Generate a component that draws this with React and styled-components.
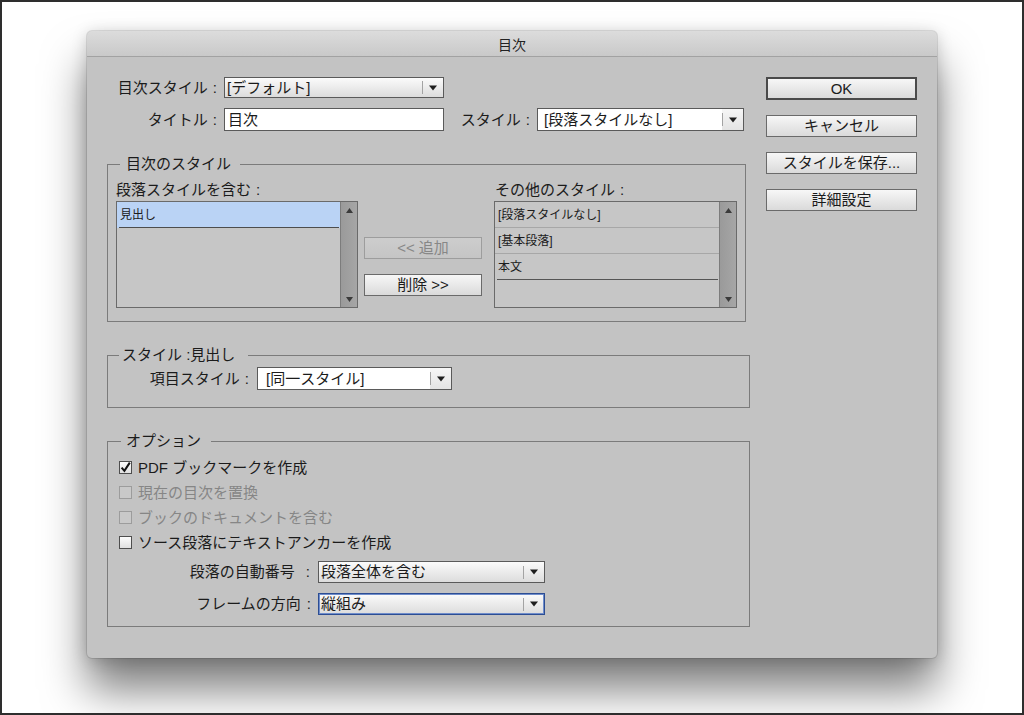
import React from 'react';
import styled, { createGlobalStyle, css } from 'styled-components';

const GlobalStyle = createGlobalStyle`
  html, body { margin: 0; padding: 0; background: #fff; }
  body {
    font-family: "Liberation Sans", "Noto Sans CJK JP", sans-serif;
    color: #1b1b1b;
  }
  *, *::before, *::after { box-sizing: border-box; }
`;

const Page = styled.div`
  width: 1024px;
  height: 715px;
  border: 2px solid #2e2e2e;
  background: #fff;
  padding: 29px 0 0 85px;
  overflow: hidden;
`;

const Dialog = styled.div`
  width: 850px;
  height: 627px;
  background: #c3c3c3;
  border-radius: 5px;
  box-shadow: 0 0 0 1px rgba(0, 0, 0, 0.1), 0 2px 16px rgba(0, 0, 0, 0.18),
    0 32px 44px rgba(0, 0, 0, 0.5);
  display: flex;
  flex-direction: column;
`;

const TitleBar = styled.div`
  height: 26px;
  border-bottom: 1px solid #a2a2a2;
  border-radius: 5px 5px 0 0;
  background: linear-gradient(#dcdcdc, #c9c9c9);
  display: flex;
  align-items: center;
  justify-content: center;
  font-size: 14px;
  color: #222;
`;

const Body = styled.div`
  display: flex;
  gap: 16px;
  padding: 20px 20px 0 20px;
`;

const LeftColumn = styled.div`
  width: 643px;
  display: flex;
  flex-direction: column;
`;

const RightColumn = styled.div`
  width: 151px;
  display: flex;
  flex-direction: column;
  gap: 15px;
`;

const Button = styled.div`
  height: ${(p) => (p.$default ? 23 : 22)}px;
  width: ${(p) => p.$w || 151}px;
  display: flex;
  align-items: center;
  justify-content: center;
  font-size: 15px;
  line-height: 18px;
  border: ${(p) => (p.$default ? '2px solid #4a4a4a' : '1px solid #6a6a6a')};
  background: linear-gradient(#f7f7f7, #dadada);
  color: #1b1b1b;
  white-space: nowrap;
  ${(p) =>
    p.$disabled &&
    css`
      border-color: #9d9d9d;
      background: linear-gradient(#cdcdcd, #c5c5c5);
      color: #878787;
    `}
`;

const FormRow = styled.div`
  display: flex;
  align-items: center;
  height: ${(p) => p.$h || 22}px;
  margin-top: ${(p) => p.$mt || 0}px;
`;

const LabelBox = styled.span`
  width: ${(p) => p.$w}px;
  text-align: right;
  font-size: 15px;
  line-height: 18px;
  white-space: nowrap;
`;

const Colon = styled.span`
  margin: 0 ${(p) => p.$after ?? 7}px 0 ${(p) => p.$before ?? 5}px;
`;

const Label = ({ w, children, after, before }) => (
  <LabelBox $w={w}>
    {children}
    <Colon $after={after} $before={before}>:</Colon>
  </LabelBox>
);

const TextInput = styled.div`
  width: ${(p) => p.$w}px;
  height: 100%;
  border: 1px solid #5a5a5a;
  background: #fff;
  padding-left: 3px;
  display: flex;
  align-items: center;
  font-size: 15px;
  line-height: 18px;
`;

const SelectBox = styled.div`
  width: ${(p) => p.$w}px;
  height: 100%;
  display: flex;
  align-items: stretch;
  border: 1px solid ${(p) => (p.$focus ? '#2c4d93' : '#5a5a5a')};
  ${(p) => p.$focus && css`box-shadow: inset 0 0 0 1px #6f8dcb;`}
  background: ${(p) => (p.$white ? '#fff' : 'linear-gradient(#fbfbfb, #dcdcdc)')};
  font-size: 15px;
  line-height: 18px;
`;

const SelectValue = styled.span`
  flex: 1;
  display: flex;
  align-items: center;
  padding-left: ${(p) => p.$pad ?? 2}px;
  white-space: nowrap;
  overflow: hidden;
`;

const ArrowArea = styled.span`
  width: 21px;
  display: flex;
  align-items: center;
  background: ${(p) => (p.$white ? 'linear-gradient(#f6f6f6, #e4e4e4)' : 'transparent')};
`;

const Divider = styled.span`
  width: 1px;
  height: 13px;
  background: #a3a3a3;
`;

const ArrowSlot = styled.span`
  flex: 1;
  display: flex;
  align-items: center;
  justify-content: center;
`;

const DownTriangle = () => (
  <svg width="8" height="6" viewBox="0 0 8 6">
    <polygon points="0,0.5 8,0.5 4,5.5" fill="#1e1e1e" />
  </svg>
);

const Select = ({ w, value, white, focus, pad }) => (
  <SelectBox $w={w} $white={white} $focus={focus}>
    <SelectValue $pad={pad}>{value}</SelectValue>
    <ArrowArea $white={white}>
      <Divider />
      <ArrowSlot>
        <DownTriangle />
      </ArrowSlot>
    </ArrowArea>
  </SelectBox>
);

const Group = styled.fieldset`
  margin: 24px 0 0;
  padding: 0;
  min-width: 0;
  width: ${(p) => p.$w || 643}px;
  border: 1px solid #7b7b7b;
`;

const Legend = styled.legend`
  margin-left: ${(p) => p.$ml}px;
  padding: ${(p) => p.$pad};
  font-size: 15px;
  line-height: 18px;
  white-space: nowrap;
`;

const StylesRow = styled.div`
  display: flex;
  padding: 8px 8px 13px 8px;
`;

const ListColumn = styled.div`
  width: ${(p) => p.$w}px;
  display: flex;
  flex-direction: column;
  gap: 2px;
`;

const ColumnLabel = styled.span`
  font-size: 15px;
  line-height: 18px;
  padding-left: ${(p) => p.$pad || 0}px;
  white-space: nowrap;
`;

const MoveButtons = styled.div`
  width: 118px;
  margin: 0 12px 12px 6px;
  display: flex;
  flex-direction: column;
  justify-content: flex-end;
  gap: 15px;
`;

const ListBox = styled.div`
  height: 107px;
  border: 1px solid #6a6a6a;
  background: #c6c6c6;
  display: flex;
`;

const ListItems = styled.div`
  flex: 1;
  display: flex;
  flex-direction: column;
`;

const ListRow = styled.div`
  height: 26px;
  padding-left: ${(p) => (p.$last ? 1 : 3)}px;
  margin: ${(p) => (p.$last ? '0 1px 0 2px' : '0')};
  display: flex;
  align-items: center;
  font-size: 12px;
  line-height: 14px;
  white-space: nowrap;
  border-bottom: 1px solid ${(p) => (p.$last ? '#555' : '#a7a7a7')};
  ${(p) =>
    p.$selected &&
    css`
      margin: 0;
      padding-left: 3px;
      border-bottom: none;
      background: linear-gradient(#bad3f5, #bad3f5) top / 100% 25px no-repeat,
        linear-gradient(90deg, #bad3f5 2px, #4d4d4d 2px, #4d4d4d calc(100% - 1px), #bad3f5 calc(100% - 1px)) bottom / 100% 1px no-repeat;
    `}
`;

const Scrollbar = styled.div`
  width: 17px;
  border-left: 1px solid #7c7c7c;
  background: linear-gradient(90deg, #9a9a9a, #a6a6a6);
  display: flex;
  flex-direction: column;
  justify-content: space-between;
  align-items: center;
  padding: 6px 0 5px;
`;

const ScrollArrow = ({ up }) => (
  <svg width="7" height="5" viewBox="0 0 7 5">
    <polygon points={up ? '0,5 7,5 3.5,0' : '0,0 7,0 3.5,5'} fill="#3a3a3a" />
  </svg>
);

const List = ({ items }) => (
  <ListBox>
    <ListItems>
      {items.map((it, i) => (
        <ListRow key={i} $selected={it.selected} $last={it.last}>
          {it.text}
        </ListRow>
      ))}
    </ListItems>
    <Scrollbar>
      <ScrollArrow up />
      <ScrollArrow />
    </Scrollbar>
  </ListBox>
);

const SingleRowContent = styled.div`
  padding: 3px 0 17px 0;
`;

const OptionsContent = styled.div`
  padding: 5px 0 11px 11px;
  display: flex;
  flex-direction: column;
`;

const CheckRow = styled.div`
  height: 25px;
  display: flex;
  align-items: center;
  gap: 6px;
  font-size: 15px;
  line-height: 18px;
  color: ${(p) => (p.$disabled ? '#868686' : '#1b1b1b')};
`;

const CheckBoxShape = styled.span`
  width: 13px;
  height: 13px;
  border: 1px solid ${(p) => (p.$disabled ? '#9c9c9c' : '#4e4e4e')};
  background: ${(p) => (p.$disabled ? '#c9c9c9' : 'linear-gradient(#fcfcfc, #e0e0e0)')};
  display: flex;
  align-items: center;
  justify-content: center;
`;

const CheckBox = ({ checked, disabled, children }) => (
  <CheckRow $disabled={disabled}>
    <CheckBoxShape $disabled={disabled}>
      {checked && (
        <svg width="11" height="11" viewBox="0 0 11 11" style={{ overflow: 'visible' }}>
          <path d="M1.6 5.6 L4.4 8.8 L9.8 0.6" fill="none" stroke="#111" strokeWidth="2" />
        </svg>
      )}
    </CheckBoxShape>
    {children}
  </CheckRow>
);

export default function App() {
  return (
    <>
      <GlobalStyle />
      <Page>
        <Dialog>
          <TitleBar>目次</TitleBar>
          <Body>
            <LeftColumn>
              <FormRow $h={21}>
                <Label w={117}>目次スタイル</Label>
                <Select w={220} value="[デフォルト]" />
              </FormRow>
              <FormRow $h={23} $mt={10}>
                <Label w={117}>タイトル</Label>
                <TextInput $w={220}>目次</TextInput>
                <Label w={93}>スタイル</Label>
                <Select w={207} value="[段落スタイルなし]" white pad={6} />
              </FormRow>

              <Group $w={639}>
                <Legend $ml={12} $pad="0 9px 0 6px">目次のスタイル</Legend>
                <StylesRow>
                  <ListColumn $w={242}>
                    <ColumnLabel>
                      段落スタイルを含む<Colon $after={0}>:</Colon>
                    </ColumnLabel>
                    <List items={[{ text: '見出し', selected: true }]} />
                  </ListColumn>
                  <MoveButtons>
                    <Button $w={118} $disabled>&lt;&lt; 追加</Button>
                    <Button $w={118}>削除 &gt;&gt;</Button>
                  </MoveButtons>
                  <ListColumn $w={243}>
                    <ColumnLabel $pad={1}>
                      その他のスタイル<Colon $after={0}>:</Colon>
                    </ColumnLabel>
                    <List
                      items={[
                        { text: '[段落スタイルなし]' },
                        { text: '[基本段落]' },
                        { text: '本文', last: true },
                      ]}
                    />
                  </ListColumn>
                </StylesRow>
              </Group>

              <Group>
                <Legend $ml={11} $pad="0 13px 0 3px">スタイル :見出し</Legend>
                <SingleRowContent>
                  <FormRow $h={23}>
                    <Label w={149} after={8}>項目スタイル</Label>
                    <Select w={195} value="[同一スタイル]" white pad={8} />
                  </FormRow>
                </SingleRowContent>
              </Group>

              <Group>
                <Legend $ml={13} $pad="0 10px 0 5px">オプション</Legend>
                <OptionsContent>
                  <CheckBox checked>PDF ブックマークを作成</CheckBox>
                  <CheckBox disabled>現在の目次を置換</CheckBox>
                  <CheckBox disabled>ブックのドキュメントを含む</CheckBox>
                  <CheckBox>ソース段落にテキストアンカーを作成</CheckBox>
                  <FormRow $h={22} $mt={6}>
                    <Label w={199} before={11} after={8}>段落の自動番号</Label>
                    <Select w={227} value="段落全体を含む" />
                  </FormRow>
                  <FormRow $h={22} $mt={10}>
                    <Label w={199} before={6} after={7}>フレームの方向</Label>
                    <Select w={227} value="縦組み" focus />
                  </FormRow>
                </OptionsContent>
              </Group>
            </LeftColumn>

            <RightColumn>
              <Button $default>OK</Button>
              <Button>キャンセル</Button>
              <Button>スタイルを保存...</Button>
              <Button>詳細設定</Button>
            </RightColumn>
          </Body>
        </Dialog>
      </Page>
    </>
  );
}
